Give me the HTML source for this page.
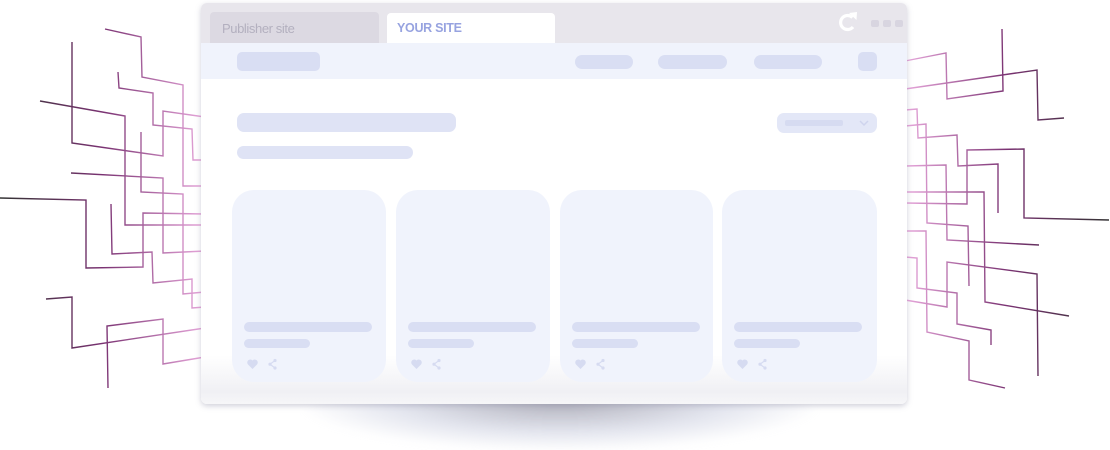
<!DOCTYPE html>
<html><head><meta charset="utf-8"><style>
*{margin:0;padding:0;box-sizing:border-box}
body{width:1110px;height:449px;background:#fff;position:relative;overflow:hidden;font-family:"Liberation Sans",sans-serif}
.a{position:absolute}
.p{position:absolute;background:#d9def3;border-radius:7px}
.card{position:absolute;top:190px;height:192px;background:#f0f3fc;border-radius:22px}
</style></head><body>
<div class="a" style="left:300px;top:380px;width:520px;height:70px;border-radius:50%;background:radial-gradient(ellipse at 50% 30%,rgba(150,150,165,0.75),rgba(200,204,222,0.5) 45%,rgba(255,255,255,0) 72%);filter:blur(4px)"></div>
<svg class="a" style="left:0;top:0" width="1110" height="449">
<defs>
<linearGradient id="gl" gradientUnits="userSpaceOnUse" x1="0" y1="0" x2="205" y2="0"><stop offset="0" stop-color="#333"/><stop offset="0.5" stop-color="#7a3272"/><stop offset="1" stop-color="#e8a8dc"/></linearGradient>
<linearGradient id="gr" gradientUnits="userSpaceOnUse" x1="1110" y1="0" x2="905" y2="0"><stop offset="0" stop-color="#333"/><stop offset="0.5" stop-color="#7a3272"/><stop offset="1" stop-color="#e8a8dc"/></linearGradient>
</defs>
<g fill="none" stroke="url(#gl)" stroke-width="1.4">
<polyline points="105,29 141,37 142,77 183,85 183,186 205,186"/>
<polyline points="118,72 119,88 153,93 153,125 192,129 193,160 205,160"/>
<polyline points="72,42 72,143 163,156 163,111 205,117"/>
<polyline points="40,101 125,116 125,225 205,225"/>
<polyline points="141,132 141,192 183,194 183,294 205,292"/>
<polyline points="71,173 163,178 163,253 205,251"/>
<polyline points="0,198 86,200 86,268 143,267 143,213 205,214"/>
<polyline points="111,204 112,254 152,252 153,283 192,279 192,308 205,307"/>
<polyline points="46,299 72,297 72,348 205,328"/>
<polyline points="108,388 107,326 163,319 163,364 205,357"/>
</g>
<g fill="none" stroke="url(#gr)" stroke-width="1.4">
<polyline points="905,61 946,53 947,99 1003,91 1002,29"/>
<polyline points="905,89 1037,70 1038,120 1064,118"/>
<polyline points="905,110 917,109 918,138 957,135 958,166 998,164 998,213"/>
<polyline points="905,126 926,124 927,223 968,226 969,286"/>
<polyline points="905,166 946,165 947,240 1039,245"/>
<polyline points="905,203 967,204 967,150 1024,149 1024,218 1109,220"/>
<polyline points="905,192 984,192 985,302 1069,316"/>
<polyline points="905,231 926,231 927,332 969,341 969,380 1005,388"/>
<polyline points="905,257 917,258 917,288 957,293 957,324 991,330 991,345"/>
<polyline points="905,300 947,307 947,262 1037,274 1038,376"/>
</g>
</svg>
<div class="a" style="left:201px;top:3px;width:706px;height:401px;background:#fff;border-radius:6px;box-shadow:0 2px 6px rgba(120,120,150,0.35);overflow:hidden">
<div class="a" style="left:0;top:0;width:706px;height:40px;background:#e8e6ec"></div>
<div class="a" style="left:9px;top:9px;width:169px;height:31px;background:#dcd9e2;border-radius:4px 4px 0 0;color:#b3b0bf;font-size:13px;letter-spacing:-0.4px;padding:9px 0 0 12px">Publisher site</div>
<div class="a" style="left:186px;top:10px;width:168px;height:31px;background:#fff;border-radius:4px 4px 0 0;color:#97a3e0;font-size:12.5px;font-weight:bold;letter-spacing:-0.3px;padding:8px 0 0 10px">YOUR SITE</div>
<svg class="a" style="left:635px;top:7px" width="24" height="24" viewBox="0 0 24 24"><path d="M16.5 7.5 A7 7 0 1 0 17 17" fill="none" stroke="#fff" stroke-width="3.2"/><path d="M13 3 L21 2 L20.5 10 Z" fill="#fff"/></svg>
<div class="a" style="left:670px;top:17px;width:8px;height:7px;background:#d8d5e0;border-radius:2px"></div>
<div class="a" style="left:682px;top:17px;width:8px;height:7px;background:#d8d5e0;border-radius:2px"></div>
<div class="a" style="left:694px;top:17px;width:8px;height:7px;background:#d8d5e0;border-radius:2px"></div>
<div class="a" style="left:0;top:40px;width:706px;height:36px;background:#f0f3fc"></div>
<div class="a" style="left:0;top:340px;width:706px;height:61px;background:linear-gradient(#fff 20%,#f0f0f4 80%,#f6f6f8)"></div>
</div>
<div class="p" style="left:237px;top:52px;width:83px;height:19px;border-radius:5px"></div>
<div class="p" style="left:575px;top:55px;width:58px;height:14px"></div>
<div class="p" style="left:658px;top:55px;width:69px;height:14px"></div>
<div class="p" style="left:754px;top:55px;width:68px;height:14px"></div>
<div class="p" style="left:858px;top:52px;width:19px;height:19px;border-radius:5px"></div>
<div class="p" style="left:237px;top:113px;width:219px;height:19px;background:#dfe3f5"></div>
<div class="p" style="left:237px;top:146px;width:176px;height:13px;background:#dfe3f5"></div>
<div class="p" style="left:777px;top:113px;width:100px;height:20px;background:#e3e7f7"></div>
<div class="a" style="left:785px;top:120px;width:58px;height:6px;background:#d6dbf1;border-radius:2px"></div>
<svg class="a" style="left:859px;top:119px" width="10" height="8"><path d="M1 2 L5 6 L9 2" fill="none" stroke="#cfd4ee" stroke-width="1.5"/></svg>
<div class="card" style="left:232px;width:154px"></div>
<div class="card" style="left:396px;width:154px"></div>
<div class="card" style="left:560px;width:153px"></div>
<div class="card" style="left:722px;width:155px"></div>
<div id="x"></div>
<script>
var xs=[232,396,560,722],h='';
xs.forEach(function(x){
h+='<div class="p" style="left:'+(x+12)+'px;top:322px;width:128px;height:10px;border-radius:5px"></div>';
h+='<div class="p" style="left:'+(x+12)+'px;top:339px;width:66px;height:9px;border-radius:5px"></div>';
h+='<svg class="a" style="left:'+(x+15)+'px;top:358px" width="30" height="12" viewBox="0 0 30 12"><path d="M5.5 11 L1 6.5 A2.6 2.6 0 0 1 5.5 2.5 A2.6 2.6 0 0 1 10 6.5 Z" fill="#d6dbf1"/><circle cx="28" cy="2.5" r="1.6" fill="#d6dbf1"/><circle cx="28" cy="10" r="1.6" fill="#d6dbf1"/><circle cx="23" cy="6.2" r="1.6" fill="#d6dbf1"/><path d="M28 2.5 L23 6.2 L28 10" stroke="#d6dbf1" stroke-width="1.2" fill="none"/></svg>';
});
document.getElementById('x').innerHTML=h;
</script>
</body></html>
